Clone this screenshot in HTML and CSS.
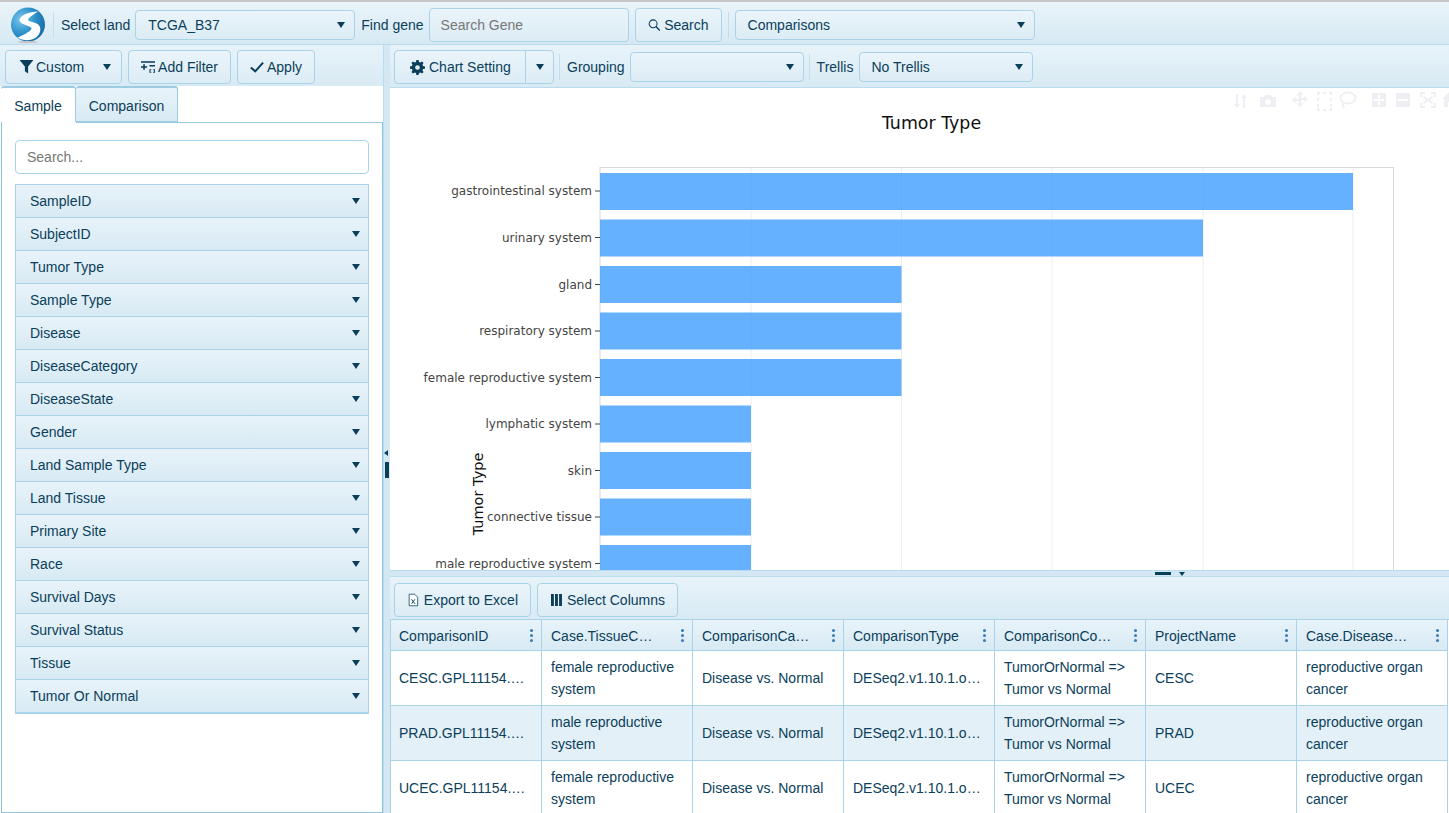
FILE: index.html
```html
<!DOCTYPE html>
<html lang="en">
<head>
    <meta charset="UTF-8">
    <title>Land Explorer</title>
    <link rel="stylesheet" href="styles.css">
</head>
<body>
    <div class="topbar">
        <svg class="logo" viewBox="0 0 36 36" width="36" height="36">
            <defs>
                <radialGradient id="ball" cx="30%" cy="35%" r="80%">
                    <stop offset="0" stop-color="#7cc6ea"/>
                    <stop offset="0.5" stop-color="#2f93cd"/>
                    <stop offset="1" stop-color="#14659c"/>
                </radialGradient>
            </defs>
            <circle cx="18" cy="17.500" r="17" fill="url(#ball)"/>
            <path d="M28 4.500 C19 5 10 8 9.500 13 C9.500 17 17 18 21 20.500 C23 22 19 25 13 28 C11 29 9 30 7.500 30.500 C13 34 21 34 26 30.500 C31 26.500 32 20 27.500 17 C24 15 18.500 14.500 18 13 C18 11 23 8 28 4.500Z" fill="#fff"/>
            <ellipse cx="18" cy="35" rx="10" ry="1" fill="#c4c4c4"/>
        </svg>
        <span class="sep sep-logo"></span>
        <label class="lbl">Select land</label>
        <div class="select select-land"><span>TCGA_B37</span><i class="caret"></i></div>
        <label class="lbl lbl-gene">Find gene</label>
        <div class="gene-input">Search Gene</div>
        <div class="btn btn-search">
            <svg viewBox="0 0 16 16" width="16" height="16"><circle cx="6.500" cy="6.500" r="5" fill="none" stroke="#0b3e5a" stroke-width="1.300"/><path d="M10 10l5 5" stroke="#0b3e5a" stroke-width="1.800"/></svg>
            Search
        </div>
        <span class="sep sep-search"></span>
        <div class="select select-view"><span>Comparisons</span><i class="caret"></i></div>
    </div>

    <div class="main">
        <div class="left">
            <div class="toolbar left-tools">
                <div class="btn btn-custom">
                    <svg viewBox="0 0 14 14" width="15" height="15"><path d="M.500 1h13L8.500 7v6.500l-3-2V7z" fill="#0b3e5a"/></svg>
                    <span class="grow">Custom</span><i class="caret"></i>
                </div>
                <div class="btn btn-filter">
                    <svg viewBox="0 0 15 14" width="15" height="14" fill="#0b3e5a"><path d="M0 1h15v1.400H0zM9 5h6v1.400H9zM0 6.200h2.400V4h1.700v2.200h2.400v1.600H4.100V10H2.400V7.800H0zM9 9.500h2v1h-1v1.500H9zM13 9.500h2V12h-1v-1.500h-1zM9 12h2v1H9zM13 12h2v1h-2z"/></svg>
                    Add Filter
                </div>
                <div class="btn btn-apply">
                    <svg viewBox="0 0 16 14" width="16" height="14"><path d="M1 7.500L6 12 15 2" fill="none" stroke="#0b3e5a" stroke-width="2.300"/></svg>
                    Apply
                </div>
            </div>
            <div class="tabs">
                <div class="tab tab-on">Sample</div>
                <div class="tab">Comparison</div>
            </div>
            <div class="tab-body">
                <div class="side-search">Search...</div>
                <div class="facets">
                    <div class="facet">SampleID<i class="caret"></i></div>
                    <div class="facet">SubjectID<i class="caret"></i></div>
                    <div class="facet">Tumor Type<i class="caret"></i></div>
                    <div class="facet">Sample Type<i class="caret"></i></div>
                    <div class="facet">Disease<i class="caret"></i></div>
                    <div class="facet">DiseaseCategory<i class="caret"></i></div>
                    <div class="facet">DiseaseState<i class="caret"></i></div>
                    <div class="facet">Gender<i class="caret"></i></div>
                    <div class="facet">Land Sample Type<i class="caret"></i></div>
                    <div class="facet">Land Tissue<i class="caret"></i></div>
                    <div class="facet">Primary Site<i class="caret"></i></div>
                    <div class="facet">Race<i class="caret"></i></div>
                    <div class="facet">Survival Days<i class="caret"></i></div>
                    <div class="facet">Survival Status<i class="caret"></i></div>
                    <div class="facet">Tissue<i class="caret"></i></div>
                    <div class="facet">Tumor Or Normal<i class="caret"></i></div>
                </div>
            </div>
        </div>

        <div class="vsplit">
            <i class="vsplit-arrow"></i>
            <i class="vsplit-grip"></i>
        </div>

        <div class="right">
            <div class="toolbar right-tools">
                <div class="btn-group">
                    <div class="btn btn-chart">
                        <svg viewBox="0 0 16 16" width="15" height="15"><path d="M6.800 0h2.400l.4 2.100 1.500.6 1.700-1.200 1.700 1.700-1.200 1.700.6 1.500 2.100.4v2.400l-2.100.4-.6 1.500 1.200 1.700-1.700 1.700-1.700-1.200-1.500.6-.4 2.100H6.800l-.4-2.100-1.500-.6-1.700 1.200-1.700-1.700 1.200-1.700-.6-1.500L0 9.200V6.800l2.100-.4.6-1.500-1.200-1.700 1.700-1.700 1.700 1.200 1.500-.6z" fill="#0b3e5a"/><circle cx="8" cy="8" r="2.500" fill="#e3f0f7"/></svg>
                        Chart Setting
                    </div>
                    <div class="btn btn-more"><i class="caret"></i></div>
                </div>
                <span class="sep sep-chart"></span>
                <label class="lbl">Grouping</label>
                <div class="select select-group"><span></span><i class="caret"></i></div>
                <span class="sep sep-group"></span>
                <label class="lbl lbl-trellis">Trellis</label>
                <div class="select select-trellis"><span>No Trellis</span><i class="caret"></i></div>
            </div>

            <div class="chart">
                <svg class="plot" width="1059" height="482" viewBox="390 88 1059 482">
                    <g fill="#eeeef3">
                        <path d="M1236 94h2v10h2l-3 4-3-4h2zM1243 108h2V98h2l-3-4-3 4h2z"/>
                        <path d="M1260 97h4l1-2h6l1 2h4v10h-16zM1268 99a3 3 0 1 0 .01 0z" fill-rule="evenodd"/>
                        <path d="M1300 92l3.500 3.500h-2.500v3.500h3.500v-2.500l3.500 3.500-3.500 3.500v-2.500H1301v3.500h2.500l-3.500 3.500-3.500-3.500h2.500V102h-3.500v2.500l-3.500-3.500 3.500-3.500v2.500h3.500v-3.500h-2.500z" transform="translate(0 -1)"/>
                        <path d="M1316 92h3v2h-1v1h-2zM1322 92h3v2h-3zM1328 92h3v3h-2v-1h-1zM1316 98h2v3h-2zM1329 98h2v3h-2zM1316 104h2v3h-2zM1329 104h2v3h-2zM1316 110v-2h2v1h1v2h-3zM1322 109h3v2h-3zM1331 108v3h-3v-2h1v-1z" transform="translate(1 0)"/>
                        <path d="M1372 93h14v14h-14zM1378 95v4h-4v2h4v4h2v-4h4v-2h-4v-4z" fill-rule="evenodd"/>
                        <path d="M1396 93h14v14h-14zM1398 99v2h10v-2z" fill-rule="evenodd"/>
                        <path d="M1420 92h5v2h-3v3h-2zM1431 92h5v5h-2v-3h-3zM1420 103h2v3h3v2h-5zM1434 103h2v5h-5v-2h3zM1424 96l4 3 4-3 1 1-3 3 3 3-1 1-4-3-4 3-1-1 3-3-3-3z"/>
                        <path d="M1449 92l-7 7h2v8h4v-5h2z"/>
                    </g>
                    <ellipse cx="1348" cy="98" rx="7.500" ry="5.500" fill="none" stroke="#eeeef3" stroke-width="1.800"/>
                    <path d="M1343 102l-.5 2 1.500 4" fill="none" stroke="#eeeef3" stroke-width="1.800"/>

                    <rect x="600" y="167.500" width="793.500" height="420" fill="#fff" stroke="#d8d8d8"/>
                    <path d="M751 168v402M901.500 168v402M1052 168v402M1203 168v402M1353 168v402" stroke="#eeeeee"/>
                    <g fill="#3f9dff" fill-opacity="0.8">
                        <rect x="600" y="173" width="753" height="37"/>
                        <rect x="600" y="219.500" width="603" height="37"/>
                        <rect x="600" y="266" width="301.500" height="37"/>
                        <rect x="600" y="312.500" width="301.500" height="37"/>
                        <rect x="600" y="359" width="301.500" height="37"/>
                        <rect x="600" y="405.500" width="151" height="37"/>
                        <rect x="600" y="452" width="151" height="37"/>
                        <rect x="600" y="498.500" width="151" height="37"/>
                        <rect x="600" y="545" width="151" height="37"/>
                    </g>
                    <path d="M595 191h5M595 237.500h5M595 284.500h5M595 331h5M595 377.500h5M595 424h5M595 470.500h5M595 517h5M595 563.500h5" stroke="#444"/>
                    <g class="tick" text-anchor="end">
                        <text x="592" y="195">gastrointestinal system</text>
                        <text x="592" y="241.500">urinary system</text>
                        <text x="592" y="288.500">gland</text>
                        <text x="592" y="335">respiratory system</text>
                        <text x="592" y="381.500">female reproductive system</text>
                        <text x="592" y="428">lymphatic system</text>
                        <text x="592" y="474.500">skin</text>
                        <text x="592" y="521">connective tissue</text>
                        <text x="592" y="567.500">male reproductive system</text>
                    </g>
                    <text class="chart-title" x="931.500" y="128.500" text-anchor="middle">Tumor Type</text>
                    <text class="axis-title" transform="translate(483 494) rotate(-90)" text-anchor="middle">Tumor Type</text>
                </svg>
            </div>

            <div class="hsplit"><i class="hsplit-grip"></i><i class="hsplit-arrow"></i></div>

            <div class="toolbar table-tools">
                <div class="btn btn-export">
                    <svg viewBox="0 0 14 16" width="14" height="16"><path d="M1.500.500h7l4 4v11h-11z" fill="#fff" stroke="#0b3e5a"/><path d="M4.500 7l4.500 6M9 7l-4.500 6" stroke="#0b3e5a" stroke-width="1.200"/></svg>
                    Export to Excel
                </div>
                <div class="btn btn-cols">
                    <svg viewBox="0 0 13 14" width="13" height="14" fill="#0b3e5a"><path d="M0 0h3.400v14H0zM4.800 0h3.400v14H4.800zM9.600 0H13v14H9.600z"/></svg>
                    Select Columns
                </div>
            </div>

            <div class="grid">
                <div class="cell head"><span>ComparisonID</span><i class="dots"></i></div>
                <div class="cell head"><span>Case.TissueC…</span><i class="dots"></i></div>
                <div class="cell head"><span>ComparisonCa…</span><i class="dots"></i></div>
                <div class="cell head"><span>ComparisonType</span><i class="dots"></i></div>
                <div class="cell head"><span>ComparisonCo…</span><i class="dots"></i></div>
                <div class="cell head"><span>ProjectName</span><i class="dots"></i></div>
                <div class="cell head"><span>Case.Disease…</span><i class="dots"></i></div>

                <div class="cell">CESC.GPL11154.…</div>
                <div class="cell">female reproductive system</div>
                <div class="cell">Disease vs. Normal</div>
                <div class="cell">DESeq2.v1.10.1.o…</div>
                <div class="cell">TumorOrNormal =&gt; Tumor vs Normal</div>
                <div class="cell">CESC</div>
                <div class="cell">reproductive organ cancer</div>

                <div class="cell alt">PRAD.GPL11154.…</div>
                <div class="cell alt">male reproductive system</div>
                <div class="cell alt">Disease vs. Normal</div>
                <div class="cell alt">DESeq2.v1.10.1.o…</div>
                <div class="cell alt">TumorOrNormal =&gt; Tumor vs Normal</div>
                <div class="cell alt">PRAD</div>
                <div class="cell alt">reproductive organ cancer</div>

                <div class="cell">UCEC.GPL11154.…</div>
                <div class="cell">female reproductive system</div>
                <div class="cell">Disease vs. Normal</div>
                <div class="cell">DESeq2.v1.10.1.o…</div>
                <div class="cell">TumorOrNormal =&gt; Tumor vs Normal</div>
                <div class="cell">UCEC</div>
                <div class="cell">reproductive organ cancer</div>
            </div>
        </div>
    </div>
</body>
</html>
```

FILE: styles.css
```css
* {
    box-sizing: border-box;
}
html, body {
    margin: 0;
    height: 813px;
    overflow: hidden;
}
body {
    font-family: "Liberation Sans", Arial, sans-serif;
    font-size: 14px;
    color: #0b3e5a;
    background: #fff;
    border-top: 2px solid #c6c6c6;
}
.topbar {
    display: flex;
    align-items: center;
    height: 42px;
    padding: 4px 0 0 10px;
    background: linear-gradient(#eaf4fa, #d6e9f3);
}
.logo {
    flex: none;
}
.sep {
    flex: none;
    width: 1px;
    height: 26px;
    background: #c3dfee;
}
.sep-logo {
    margin: 0 7px 0 7px;
}
.sep-search {
    margin: 0 6px 0 6px;
}
.sep-chart {
    margin: 0 7px 0 5px;
}
.sep-group {
    margin: 0 7px 0 5px;
}
.lbl {
    flex: none;
    margin-right: 5px;
}
.lbl-gene {
    margin-left: 6px;
}
.lbl-trellis {
    margin-right: 6px;
}
.select {
    display: flex;
    align-items: center;
    justify-content: space-between;
    flex: none;
    height: 30px;
    padding: 0 9px 0 12px;
    border: 1px solid #a9d3e8;
    border-radius: 4px;
    background: linear-gradient(#eaf4fa, #dcecf5);
}
.select-land {
    width: 220px;
}
.select-view {
    width: 300px;
}
.select-group {
    width: 174px;
}
.select-trellis {
    width: 174px;
    padding-left: 11px;
}
.caret {
    display: inline-block;
    flex: none;
    width: 0;
    height: 0;
    border-left: 4px solid transparent;
    border-right: 4px solid transparent;
    border-top: 6px solid #0b3e5a;
}
.gene-input {
    flex: none;
    width: 200px;
    height: 34px;
    margin-right: 6px;
    padding: 8px 11px;
    color: #777;
    border: 1px solid #a9d3e8;
    border-radius: 4px;
    background: linear-gradient(#eaf4fa, #dcecf5);
}
.btn {
    display: flex;
    align-items: center;
    gap: 4px;
    flex: none;
    height: 34px;
    padding: 0 12px;
    border: 1px solid #a9d3e8;
    border-radius: 4px;
    background: linear-gradient(#eaf4fa, #dcecf5);
    white-space: nowrap;
}
.btn-search {
    width: 87px;
    padding-left: 12px;
}
.main {
    display: flex;
    height: 769px;
    border-top: 1px solid #b9dcee;
}
.left {
    flex: none;
    width: 383px;
    display: flex;
    flex-direction: column;
}
.toolbar {
    display: flex;
    align-items: center;
    background: linear-gradient(#e8f3f9, #d8eaf4);
}
.left-tools {
    flex: none;
    height: 41px;
    gap: 6px;
    padding: 2px 0 0 5px;
}
.grow {
    flex: 1;
}
.btn-custom {
    width: 117px;
    padding-left: 13px;
    padding-right: 10px;
    gap: 2px;
}
.btn-filter {
    width: 103px;
    gap: 3px;
}
.btn-apply {
    width: 78px;
    gap: 3px;
}
.tabs {
    display: flex;
    flex: none;
    height: 36px;
    padding-left: 1px;
    background: #fff;
}
.tab {
    padding: 10px 0 0;
    width: 102px;
    text-align: center;
    border: 1px solid #9ccbe2;
    border-top: 2px solid #9ccbe2;
    border-left: 0;
    border-radius: 3px 3px 0 0;
    background: linear-gradient(#e8f3f9, #d8eaf4);
}
.tab-on {
    width: 75px;
    border-bottom: 0;
    background: #fff;
}
.tab-body {
    flex: 1;
    margin-left: 1px;
    padding: 18px 13px 0 13px;
    border: 1px solid #8fc4de;
    border-top: 0;
    background: linear-gradient(#9ccbe2, #9ccbe2) 74px 0 / 400px 1px no-repeat #fff;
}
.side-search {
    height: 34px;
    padding: 8px 11px;
    color: #777;
    border: 1px solid #a9d3e8;
    border-radius: 4px;
    background: #fff;
}
.facets {
    margin-top: 10px;
    border: 1px solid #a9d3e8;
    border-bottom-width: 2px;
}
.facet {
    display: flex;
    align-items: center;
    justify-content: space-between;
    height: 33px;
    padding: 0 8px 0 14px;
    border-bottom: 1px solid #a9d3e8;
    background: linear-gradient(#e8f3f9, #d8eaf4);
}
.facet:last-child {
    height: 32px;
    border-bottom: 0;
}
.vsplit {
    flex: none;
    position: relative;
    width: 7px;
    background: #d3e8f3;
    border-left: 1px solid #b9dcee;
}
.vsplit-arrow {
    position: absolute;
    left: 0;
    top: 405px;
    border-top: 3px solid transparent;
    border-bottom: 3px solid transparent;
    border-right: 4px solid #0b3e5a;
}
.vsplit-grip {
    position: absolute;
    left: 1px;
    top: 417px;
    width: 4px;
    height: 16px;
    background: #0b3e5a;
}
.right {
    flex: 1;
    min-width: 0;
    display: flex;
    flex-direction: column;
}
.right-tools {
    flex: none;
    height: 43px;
    padding: 2px 0 0 4px;
    border-bottom: 1px solid #b9dcee;
}
.btn-group {
    display: flex;
    flex: none;
}
.btn-chart {
    width: 132px;
    padding-left: 15px;
    gap: 4px;
    border-radius: 4px 0 0 4px;
}
.btn-more {
    width: 29px;
    padding-left: 10px;
    margin-left: -1px;
    border-radius: 0 4px 4px 0;
}
.chart {
    flex: none;
    height: 482px;
    background: #fff;
    overflow: hidden;
}
.plot {
    display: block;
}
.tick text {
    font-family: "DejaVu Sans", sans-serif;
    font-size: 12px;
    fill: #444;
}
.chart-title {
    font-family: "DejaVu Sans", sans-serif;
    font-size: 17.400px;
    fill: #111;
}
.axis-title {
    font-family: "DejaVu Sans", sans-serif;
    font-size: 14.500px;
    fill: #111;
}
.hsplit {
    flex: none;
    display: flex;
    align-items: flex-start;
    gap: 8px;
    height: 7px;
    padding: 1px 0 0 765px;
    background: #d3e8f3;
    border-top: 1px solid #b9dcee;
    border-bottom: 1px solid #b9dcee;
}
.hsplit-grip {
    width: 16px;
    height: 3px;
    background: #0b3e5a;
}
.hsplit-arrow {
    width: 0;
    height: 0;
    border-left: 3px solid transparent;
    border-right: 3px solid transparent;
    border-top: 4px solid #0b3e5a;
}
.table-tools {
    flex: none;
    height: 42px;
    gap: 6px;
    padding: 3px 0 0 4px;
}
.btn-export {
    width: 137px;
    padding-left: 13px;
    gap: 5px;
}
.btn-cols {
    width: 141px;
    padding-left: 13px;
    gap: 5px;
}
.grid {
    display: grid;
    grid-template-columns: 152px repeat(6, 151px);
    grid-template-rows: 31px 55px 55px 55px;
    border-top: 1px solid #a9d3e8;
}
.cell {
    display: flex;
    align-items: center;
    padding: 0 8px 0 9px;
    line-height: 22px;
    border-right: 1px solid #a9d3e8;
    border-bottom: 1px solid #a9d3e8;
    background: #fff;
}
.cell:nth-child(7n+1) {
    padding-left: 8px;
    border-left: 1px solid #a9d3e8;
}
.cell.alt {
    background: #e3f0f7;
}
.cell.head {
    justify-content: space-between;
    padding-top: 1px;
    padding-right: 8px;
    background: linear-gradient(#e8f3f9, #d8eaf4);
}
.dots {
    flex: none;
    width: 3px;
    height: 3px;
    border-radius: 50%;
    background: #3b7cb5;
    box-shadow: 0 -5px 0 #3b7cb5, 0 5px 0 #3b7cb5;
}
```
